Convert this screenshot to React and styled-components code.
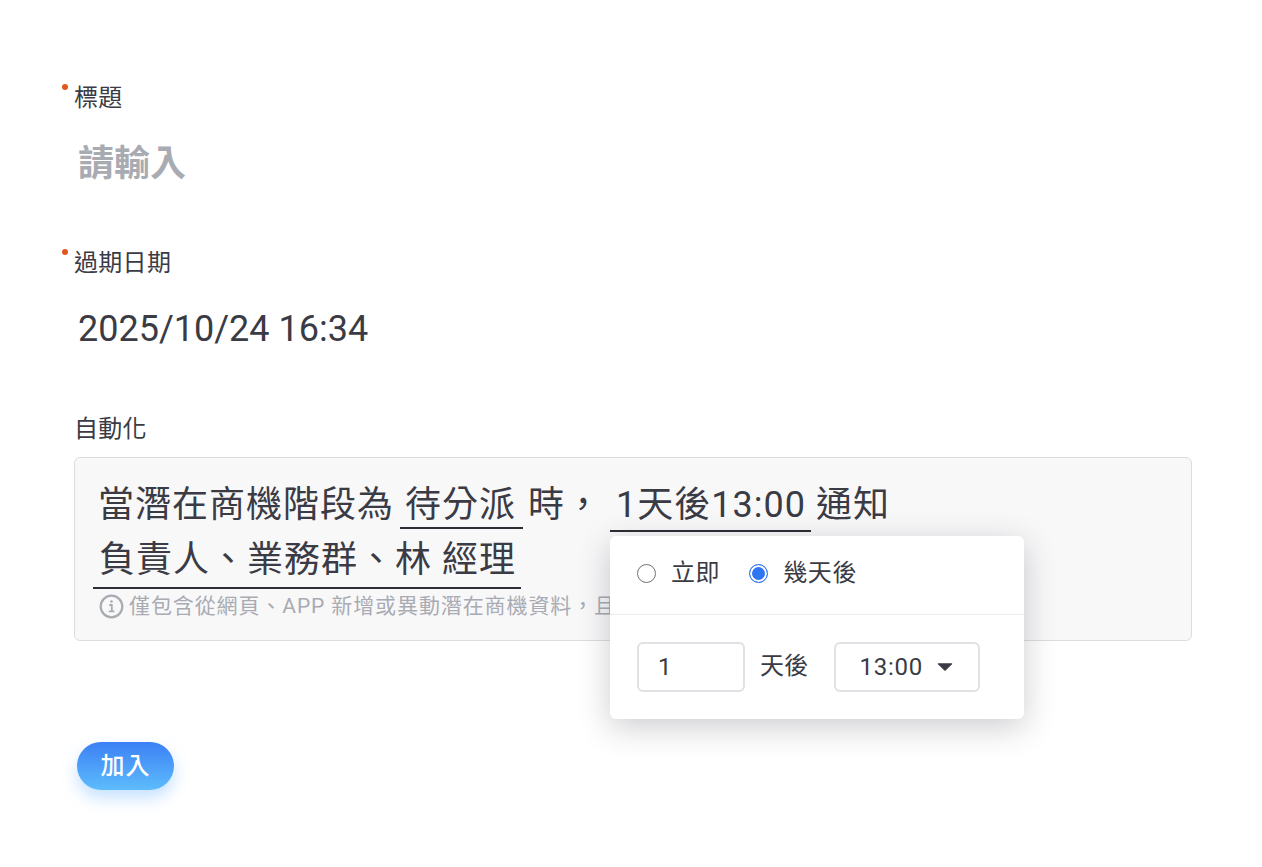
import React from "react";
import styled, { createGlobalStyle } from "styled-components";

const fonts = `Roboto, "Noto Sans CJK TC", sans-serif`;

const GlobalStyle = createGlobalStyle`
  html, body {
    margin: 0;
    background: #fff;
    font-family: ${fonts};
    color: #3a3b44;
  }
`;

const Page = styled.div`
  width: 1262px;
  height: 867px;
  box-sizing: border-box;
  padding: 81px 70px 0 74px;
  overflow: hidden;
`;

const Field = styled.div`
  padding-bottom: ${(p) => p.$gap || 49}px;
`;

const Label = styled.div`
  position: relative;
  height: 34px;
  line-height: 34px;
  font-size: 24px;
  letter-spacing: 0.3px;
  color: #3a3b44;
  ${(p) =>
    p.$required &&
    `
    &::before {
      content: "";
      position: absolute;
      left: -12px;
      top: 3px;
      width: 6px;
      height: 6px;
      border-radius: 50%;
      background: #e2571e;
    }
  `}
`;

const TextInput = styled.input`
  display: block;
  width: 100%;
  height: 66px;
  margin-top: 16px;
  padding: 0 0 0 4px;
  box-sizing: border-box;
  border: none;
  outline: none;
  background: transparent;
  font-family: ${fonts};
  font-size: 36px;
  color: #3a3b44;

  &::placeholder {
    color: #a9abb3;
    font-weight: 700;
    opacity: 1;
  }
`;

const AutomationBox = styled.div`
  position: relative;
  height: 184px;
  margin-top: 11px;
  box-sizing: border-box;
  padding: 21px 23px 0;
  background: #f8f8f9;
  border: 1px solid #dcdde0;
  border-radius: 6px;
`;

const Sentence = styled.div`
  display: flex;
  align-items: flex-start;
  height: 55px;
  font-size: 36px;
  line-height: 52px;
  letter-spacing: 1px;
  white-space: nowrap;
`;

const Token = styled.span`
  display: block;
  width: ${(p) => p.$width}px;
  height: ${(p) => p.$height}px;
  margin: 0 5px 0 ${(p) => p.$left}px;
  padding-left: ${(p) => p.$pad}px;
  box-sizing: border-box;
  border-bottom: 2px solid #2d2e35;
`;

const Hint = styled.div`
  display: flex;
  align-items: center;
  gap: 5px;
  margin: 4px 0 0 1px;
  font-size: 21px;
  line-height: 26px;
  letter-spacing: 0.9px;
  color: #a9abb3;
  white-space: nowrap;

  svg {
    flex: none;
  }
`;

const Popover = styled.div`
  position: absolute;
  left: 535px;
  top: 78px;
  width: 414px;
  height: 183px;
  background: #fff;
  border-radius: 6px;
  box-shadow: 0 8px 32px rgba(40, 42, 55, 0.24);
`;

const RadioRow = styled.div`
  display: flex;
  align-items: center;
  height: 79px;
  box-sizing: border-box;
  padding: 0 0 3px 27px;
  border-bottom: 1px solid #ececee;
`;

const RadioOption = styled.div`
  display: flex;
  align-items: center;
  gap: 15px;
  margin-right: 29px;
  font-size: 24px;
  letter-spacing: 0.6px;
`;

const RadioText = styled.span`
  padding-bottom: 6px;
`;

const RadioDot = styled.span`
  display: block;
  width: 19px;
  height: 19px;
  box-sizing: border-box;
  border-radius: 50%;
  border: 1.5px solid ${(p) => (p.$checked ? "#2f74f0" : "#6f7076")};
  background: ${(p) => (p.$checked ? "#2f74f0" : "#fff")};
  box-shadow: ${(p) => (p.$checked ? "inset 0 0 0 2px #fff" : "none")};
`;

const ControlRow = styled.div`
  display: flex;
  align-items: center;
  padding: 27px 0 0 27px;
  font-size: 24px;
`;

const DayBox = styled.div`
  width: 108px;
  height: 50px;
  box-sizing: border-box;
  padding-left: 19px;
  line-height: 46px;
  background: #fff;
  border: 2px solid #e0e1e4;
  border-radius: 6px;
`;

const Unit = styled.span`
  margin: 0 25px 0 15px;
  padding-bottom: 8px;
  letter-spacing: 0.3px;
`;

const TimeBox = styled.div`
  display: flex;
  align-items: center;
  justify-content: space-between;
  width: 146px;
  height: 50px;
  box-sizing: border-box;
  padding: 0 25px 0 24px;
  letter-spacing: 0.7px;
  background: #fff;
  border: 2px solid #e0e1e4;
  border-radius: 6px;
`;

const AddButton = styled.button`
  display: block;
  width: 97px;
  height: 48px;
  margin: 101px 0 0 3px;
  padding: 0 0 6px;
  border: none;
  border-radius: 24px;
  background: linear-gradient(180deg, #3c80f5 0%, #5dbcfc 100%);
  box-shadow: 0 8px 16px rgba(90, 170, 255, 0.35);
  color: #fff;
  font-family: ${fonts};
  font-size: 24px;
  font-weight: 500;
  letter-spacing: 1px;
`;

const InfoIcon = () => (
  <svg width="25" height="25" viewBox="0 0 25 25" fill="none" stroke="#a9abb3">
    <circle cx="12.5" cy="12.5" r="10.8" strokeWidth="2.2" />
    <circle cx="12.5" cy="7.6" r="1.3" fill="#a9abb3" stroke="none" />
    <path d="M10.3 11h2.5v6.2M9.8 17.4h5.6" strokeWidth="1.8" />
  </svg>
);

const Caret = () => (
  <svg width="16" height="10" viewBox="0 0 16 10">
    <path d="M1.5 1.2h13c.6 0 .9.6.5 1L8.6 8.5a.9.9 0 0 1-1.2 0L1 2.2c-.4-.4-.1-1 .5-1z" fill="#3a3b44" />
  </svg>
);

const App = () => {
  return (
    <Page>
      <GlobalStyle />
      <Field>
        <Label $required>標題</Label>
        <TextInput placeholder="請輸入" readOnly />
      </Field>
      <Field $gap={50}>
        <Label $required>過期日期</Label>
        <TextInput value="2025/10/24 16:34" readOnly />
      </Field>
      <Label>自動化</Label>
      <AutomationBox>
        <Sentence>
          當潛在商機階段為
          <Token $width={123} $height={50} $left={6} $pad={5}>待分派</Token>
          時，
          <Token $width={201} $height={53} $left={8} $pad={6}>1天後13:00</Token>
          通知
        </Sentence>
        <Sentence>
          <Token $width={428} $height={55} $left={-5} $pad={6}>負責人、業務群、林 經理</Token>
        </Sentence>
        <Hint>
          <InfoIcon />
          僅包含從網頁、APP 新增或異動潛在商機資料，且
        </Hint>
        <Popover>
          <RadioRow>
            <RadioOption>
              <RadioDot />
              <RadioText>立即</RadioText>
            </RadioOption>
            <RadioOption>
              <RadioDot $checked />
              <RadioText>幾天後</RadioText>
            </RadioOption>
          </RadioRow>
          <ControlRow>
            <DayBox>1</DayBox>
            <Unit>天後</Unit>
            <TimeBox>
              13:00
              <Caret />
            </TimeBox>
          </ControlRow>
        </Popover>
      </AutomationBox>
      <AddButton>加入</AddButton>
    </Page>
  );
};

export default App;
